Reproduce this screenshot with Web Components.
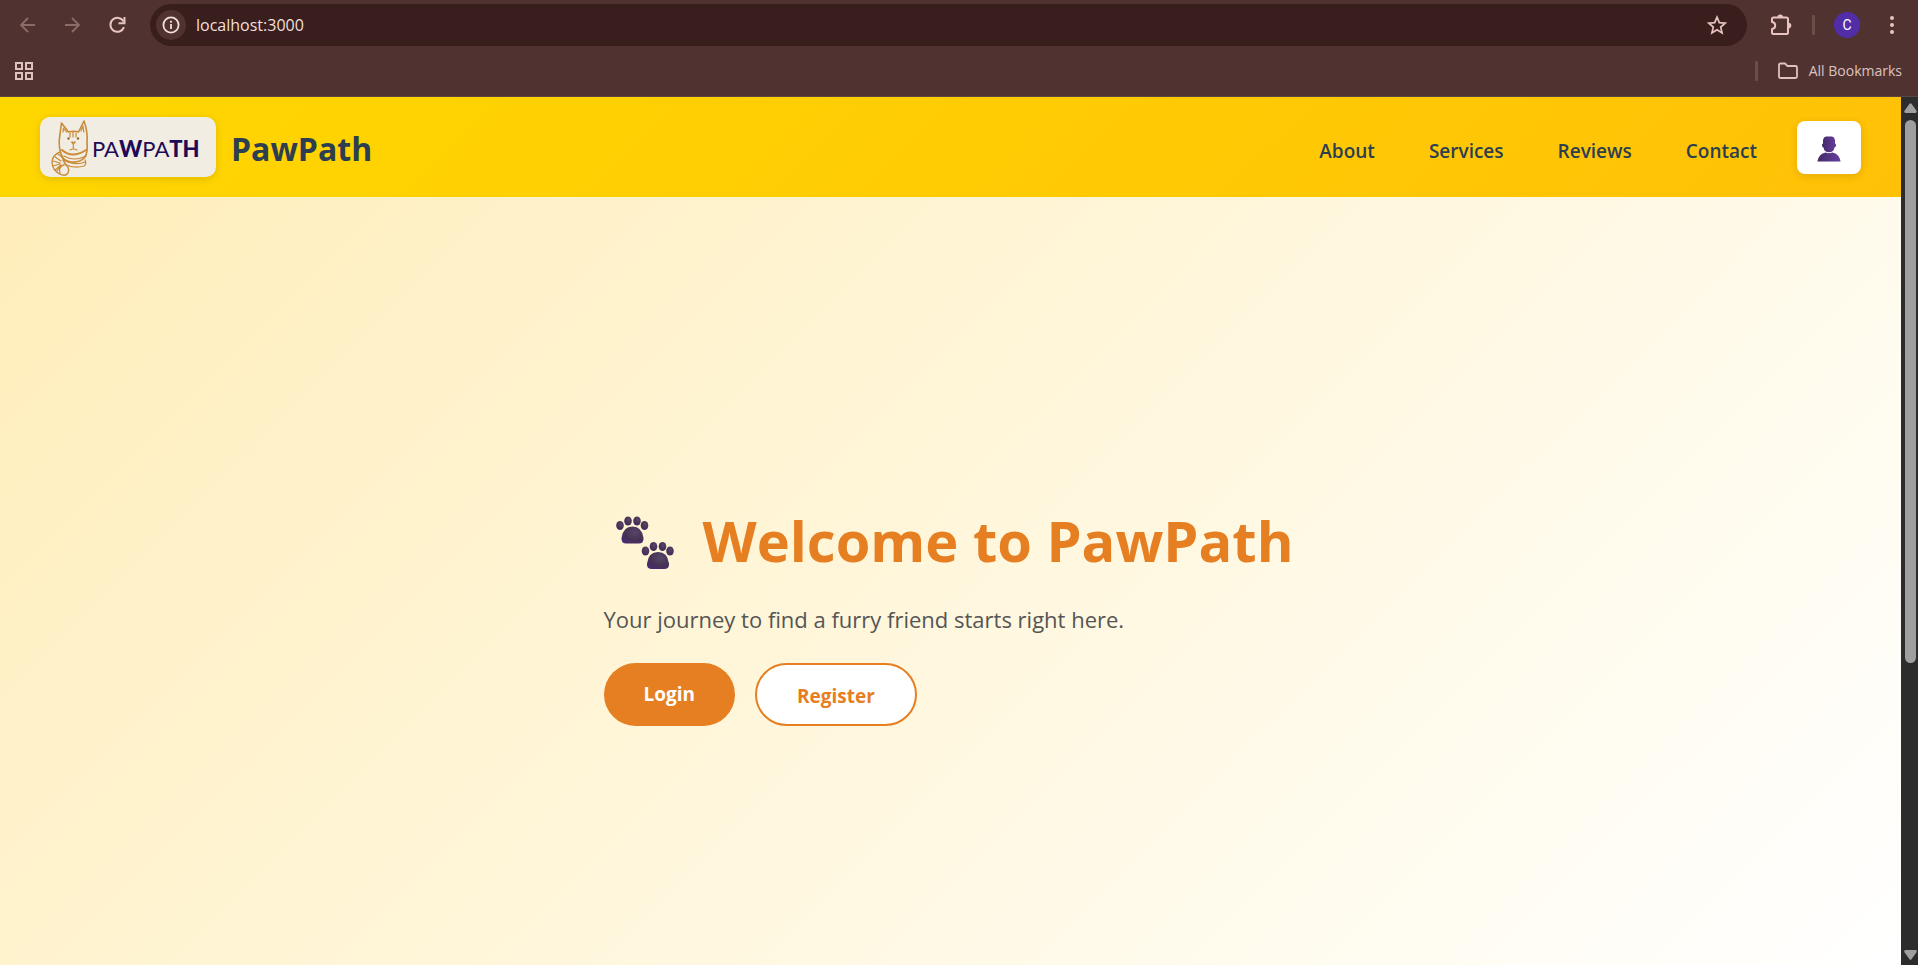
<!DOCTYPE html>
<html lang="en">
<head>
<meta charset="utf-8">
<title>PawPath</title>
<style>
html,body{height:100%;margin:0}
body{font-family:"Open Sans","Noto Sans",sans-serif;overflow:hidden;color:#2c3e50}
</style>
</head>
<body>
<app-window>
  <browser-toolbar slot="chrome"></browser-toolbar>
  <bookmarks-bar slot="chrome"></bookmarks-bar>
  <site-header>
    <nav-link href="#about">About</nav-link>
    <nav-link href="#services">Services</nav-link>
    <nav-link href="#reviews">Reviews</nav-link>
    <nav-link href="#contact">Contact</nav-link>
  </site-header>
  <hero-section>
    <span slot="title">Welcome to PawPath</span>
    <span slot="tagline">Your journey to find a furry friend starts right here.</span>
    <pill-link slot="actions" href="#login">Login</pill-link>
    <pill-link slot="actions" href="#register" outline>Register</pill-link>
  </hero-section>
  <scroll-track slot="scroll"></scroll-track>
</app-window>
<script>
function define(name, html, setup){
  const template=document.createElement('template');
  template.innerHTML=html;
  customElements.define(name,class extends HTMLElement{
    constructor(){
      super();
      this.attachShadow({mode:'open'}).append(template.content.cloneNode(true));
    }
    connectedCallback(){ if(setup) setup(this,this.shadowRoot); }
  });
}

define('app-window',`
<style>
:host{display:flex;flex-direction:column;height:100vh;background:#503331}
.view{flex:1;min-height:0;display:flex;border-top:1px solid #5c4643}
main{flex:1;min-width:0;display:flex;flex-direction:column;background:linear-gradient(135deg,#ffedb8,#fff8e1 58%,#fff)}
</style>
<slot name="chrome"></slot>
<div class="view"><main><slot></slot></main><slot name="scroll"></slot></div>`);

define('browser-toolbar',`
<style>
:host{display:flex;align-items:center;height:50px;padding:0 14px 0 16px;color:#e8c4c0}
button{border:0;background:none;padding:0;margin:0;color:inherit;display:grid;place-items:center;width:24px;height:24px}
svg{display:block}
.nav{display:flex;gap:21px;margin-right:20px}
.nav .off{color:#8b6c69}
.address{flex:1;display:flex;align-items:center;height:42px;border-radius:21px;background:#381e1d;padding:0 18px 0 6px;gap:10px}
.info{width:30px;height:30px;border-radius:50%;background:#503331;color:#f1dfdc}
input{flex:1;min-width:0;border:0;outline:0;background:none;padding:0;color:#f3dedb;font:16px/24px "Open Sans","Noto Sans",sans-serif}
.tools{display:flex;align-items:center;margin-left:22px}
.sep{width:3px;height:20px;border-radius:1px;background:#6b4d4a;margin:0 19px}
.avatar{width:26px;height:26px;border-radius:50%;background:#512da8;color:#fff;font:14px/26px Roboto,sans-serif;margin-right:20px}
</style>
<div class="nav">
<button class="off" aria-label="Back"><svg width="24" height="24" viewBox="0 0 24 24" fill="none" stroke="currentColor" stroke-width="1.8"><path d="M19 12H5.500M12 5L5 12l7 7"/></svg></button>
<button class="off" aria-label="Forward"><svg width="24" height="24" viewBox="0 0 24 24" fill="none" stroke="currentColor" stroke-width="1.800"><path d="M4 12h13.500M11 5l7 7-7 7"/></svg></button>
<button aria-label="Reload"><svg width="24" height="24" viewBox="0 0 24 24" fill="none" stroke="currentColor" stroke-width="2"><path d="M18 14.200A7 7 0 1 1 17.600 8.500"/><path d="M18.500 4v6.200H12.500"/></svg></button>
</div>
<div class="address">
<button class="info" aria-label="Site information"><svg width="20" height="20" viewBox="0 0 20 20" fill="none" stroke="currentColor" stroke-width="1.800"><circle cx="10" cy="10" r="7.600"/><path d="M10 9v5M10 5.800v2"/></svg></button>
<input aria-label="Address" value="localhost:3000" spellcheck="false">
<button aria-label="Bookmark this page"><svg width="24" height="24" viewBox="0 0 24 24" fill="none" stroke="currentColor" stroke-width="1.700"><path d="M12 4.200l2.300 5.500 5.900.5-4.500 3.900 1.400 5.800-5.100-3.100-5.100 3.100 1.400-5.800-4.500-3.900 5.900-.5z"/></svg></button>
</div>
<div class="tools">
<button aria-label="Extensions"><svg width="24" height="24" viewBox="0 0 24 24"><path fill="none" stroke="currentColor" stroke-width="2" stroke-linejoin="round" d="M4.500 4.500h13q1.500 0 1.500 1.500v13.500q0 1.500-1.500 1.500h-13Q3 21 3 19.500V16c2.500-.3 3.200-1.800 3.200-3.500S5.500 9.300 3 9V6q0-1.500 1.500-1.500z"/><path fill="currentColor" d="M8.500 4.200a2.800 2.800 0 0 1 5.600 0zM19.500 9.800a2.800 2.800 0 0 1 0 5.600z"/></svg></button>
<span class="sep"></span>
<button class="avatar" aria-label="Profile">C</button>
<button aria-label="Menu"><svg width="24" height="24" viewBox="0 0 24 24" fill="currentColor"><circle cx="12" cy="5" r="2"/><circle cx="12" cy="12" r="2"/><circle cx="12" cy="19" r="2"/></svg></button>
</div>`);

define('bookmarks-bar',`
<style>
:host{display:flex;align-items:center;justify-content:space-between;height:46px;padding:0 16px 4px 14px;box-sizing:border-box;color:#dcc3c0}
button{border:0;background:none;padding:0;color:inherit;display:flex;align-items:center;gap:10px;font:14px/20px "Open Sans","Noto Sans",sans-serif}
svg{display:block}
.right{display:flex;align-items:center;gap:19px}
.sep{width:3px;height:20px;border-radius:1px;background:#6b4d4a}
</style>
<button aria-label="Apps"><svg width="20" height="20" viewBox="0 0 20 20" fill="none" stroke="currentColor" stroke-width="2"><path d="M2 2h6v6H2zM12 2h6v6h-6zM2 12h6v6H2zM12 12h6v6h-6z"/></svg></button>
<div class="right"><span class="sep"></span>
<button><svg width="22" height="18" viewBox="0 0 22 18" fill="none" stroke="currentColor" stroke-width="1.800" stroke-linejoin="round"><path d="M2 3q0-1.500 1.500-1.500H8L10.500 4h8Q20 4 20 5.500v9q0 1.500-1.500 1.500h-15Q2 16 2 14.500z"/></svg>All Bookmarks</button></div>`);

define('scroll-track',`
<style>
:host{display:flex;flex-direction:column;align-items:center;justify-content:space-between;width:17px;background:#2c2c2c;padding:6px 0 5px 2px;box-sizing:border-box}
svg{display:block}
.rail{flex:1;width:11px;margin:7px 0 8px}
.thumb{height:66%;border-radius:6px;background:#9f9f9f}
</style>
<svg width="13" height="10" viewBox="0 0 13 10" fill="#9f9f9f"><path d="M5.500.8q1-1.200 2 0l5 7q.8 2-1 2.200h-10Q-.3 9.800.5 7.800z"/></svg>
<div class="rail"><div class="thumb"></div></div>
<svg width="13" height="10" viewBox="0 0 13 10" fill="#9f9f9f"><path d="M5.500 9.200q1 1.200 2 0l5-7q.8-2-1-2.200h-10Q-.3.2.5 2.200z"/></svg>`);

define('paw-logo',`
<style>
:host{display:flex;align-items:center;width:176px;height:60px;border-radius:10px;background:#f2ede2;box-shadow:0 2px 8px #0000001f;box-sizing:border-box;padding-left:10px}
svg{display:block}
.word{display:flex;align-items:center;padding-top:4px;color:#1d0b58;font:22px/30px Lato,"Open Sans",sans-serif}
b{font-weight:900}
</style>
<svg width="42" height="60" viewBox="0 0 42 60" fill="none" stroke="#c98a3a" stroke-width="1.200" stroke-linecap="round" stroke-linejoin="round">
<path stroke-width="1.600" d="M10 17L11.500 6l7 9q5-1.500 10 0L34 4q4 11 3 22 1 9-2 14-5 6-14 5-8-1-10-8-3-9-1-20z"/>
<path d="M13 15l.5-4 3 4M31 14l2-5 .8 6M20 16v4M23 15v5M26 16v4M21.500 25l1.800 2 2-2zM23.300 27v4M20 33q3-2 7 0"/>
<path stroke-width="2" d="M12 33q10 9 24 0"/><path d="M14 39q10 6 22 0M13 43q12 6 22 2M14 47q10 5 20 2q3-2 1-6"/>
<path stroke-width="1.400" d="M10 35q-8 3-8 11 1 8 8 11 5 3 8-1 2-5-2-8-3-4-4-9"/><path d="M8 37l4 3M5 40l6 4M3 44l7 2M3 49l7-2M5 53l6-5M10 56q-2-6 4-8M7 54q2-4 6-6"/>
<g fill="#9a6530" stroke="none"><circle cx="18.500" cy="21.500" r="1.200"/><circle cx="28" cy="21.500" r="1.200"/></g>
</svg>
<span class="word"><span>PA</span><b>W</b><span>PA</span><b>TH</b></span>`);

define('nav-link',`
<style>
:host{display:block}
a{display:block;color:#2c3e50;text-decoration:none;font-size:19px;line-height:26px;font-weight:600}
</style><a><slot></slot></a>`,(el,root)=>{root.querySelector('a').href=el.getAttribute('href')});

define('site-header',`
<style>
:host{display:flex;align-items:center;justify-content:space-between;height:100px;flex:none;padding:0 40px;box-sizing:border-box;background:linear-gradient(135deg,#ffd700,#ffc107)}
.brand{display:flex;align-items:center;gap:15px;color:#2c3e50;text-decoration:none;font-size:32px;line-height:44px;font-weight:700}
.name{padding-top:4px}
.side{display:flex;align-items:center;gap:40px}
nav{display:flex;gap:54px;padding-top:8px}
button{width:64px;height:53px;border:0;border-radius:8px;background:#fff;display:grid;place-items:center;padding:4px 0 0;box-shadow:0 2px 8px #0000001f}
svg{display:block}
</style>
<a class="brand" href="#home"><paw-logo></paw-logo><span class="name">PawPath</span></a>
<div class="side"><nav><slot></slot></nav>
<button aria-label="Account"><svg width="24" height="26" viewBox="0 0 24 26"><defs><linearGradient id="u"><stop stop-color="#432a66"/><stop offset="1" stop-color="#663f9e"/></linearGradient></defs><path fill="url(#u)" d="M6 4Q6.500 1 9 .6h6Q17.500 1 18 4v3.500q1.400.2 1 2.300-.4 1.700-1.500 1.700Q16.800 16.200 12 16.200T6.500 11.500q-1.100 0-1.500-1.700-.4-2.100 1-2.300z"/><path fill="url(#u)" d="M.4 25.500Q2 17.500 8.500 16.600q3.500 1.400 7 0 6.500.9 8.100 8.900z"/></svg></button></div>`);

define('pill-link',`
<style>
:host{display:flex}
a{display:block;padding:20px 40px 16px;border-radius:32px;background:#e67e22;color:#fff;text-decoration:none;font-size:19px;line-height:23px;font-weight:700}
:host([outline]) a{background:#fff;color:#e67e22;border:2px solid #e67e22}
</style><a><slot></slot></a>`,(el,root)=>{root.querySelector('a').href=el.getAttribute('href')});

define('hero-section',`
<style>
:host{flex:1;min-height:0;display:flex;align-items:center;justify-content:center;padding-top:64px}
h1{display:flex;align-items:center;gap:28px;margin:0;padding:0 4px 0 12px;color:#e67e22;font-size:56px;line-height:78px;font-weight:700}
p{margin:24px 0 28px;font-size:22px;line-height:32px;color:#555}
.actions{display:flex;gap:20px}
svg{display:block;padding-top:6px}
</style>
<div class="content">
<h1><svg width="59" height="54" viewBox="0 0 59 54" aria-hidden="true"><defs><radialGradient id="p" cx=".6" cy=".35" r=".75"><stop stop-color="#57466b"/><stop offset=".6" stop-color="#453253"/><stop offset="1" stop-color="#492872"/></radialGradient>
<g id="paw" fill="url(#p)"><ellipse cx="4" cy="9.500" rx="3.800" ry="4.500"/><ellipse cx="12" cy="5" rx="3.800" ry="4.600"/><ellipse cx="21" cy="5" rx="3.800" ry="4.600"/><ellipse cx="28.500" cy="9.500" rx="3.800" ry="4.500"/><path d="M5.500 22Q7 10.500 16.500 10.500T27.500 22q.5 5.500-5 5.500h-12q-5.500 0-5-5.500z"/></g></defs><use href="#paw"/><use href="#paw" x="25.500" y="25.500"/></svg><slot name="title"></slot></h1>
<p><slot name="tagline"></slot></p>
<div class="actions"><slot name="actions"></slot></div>
</div>`);
</script>
</body>
</html>
